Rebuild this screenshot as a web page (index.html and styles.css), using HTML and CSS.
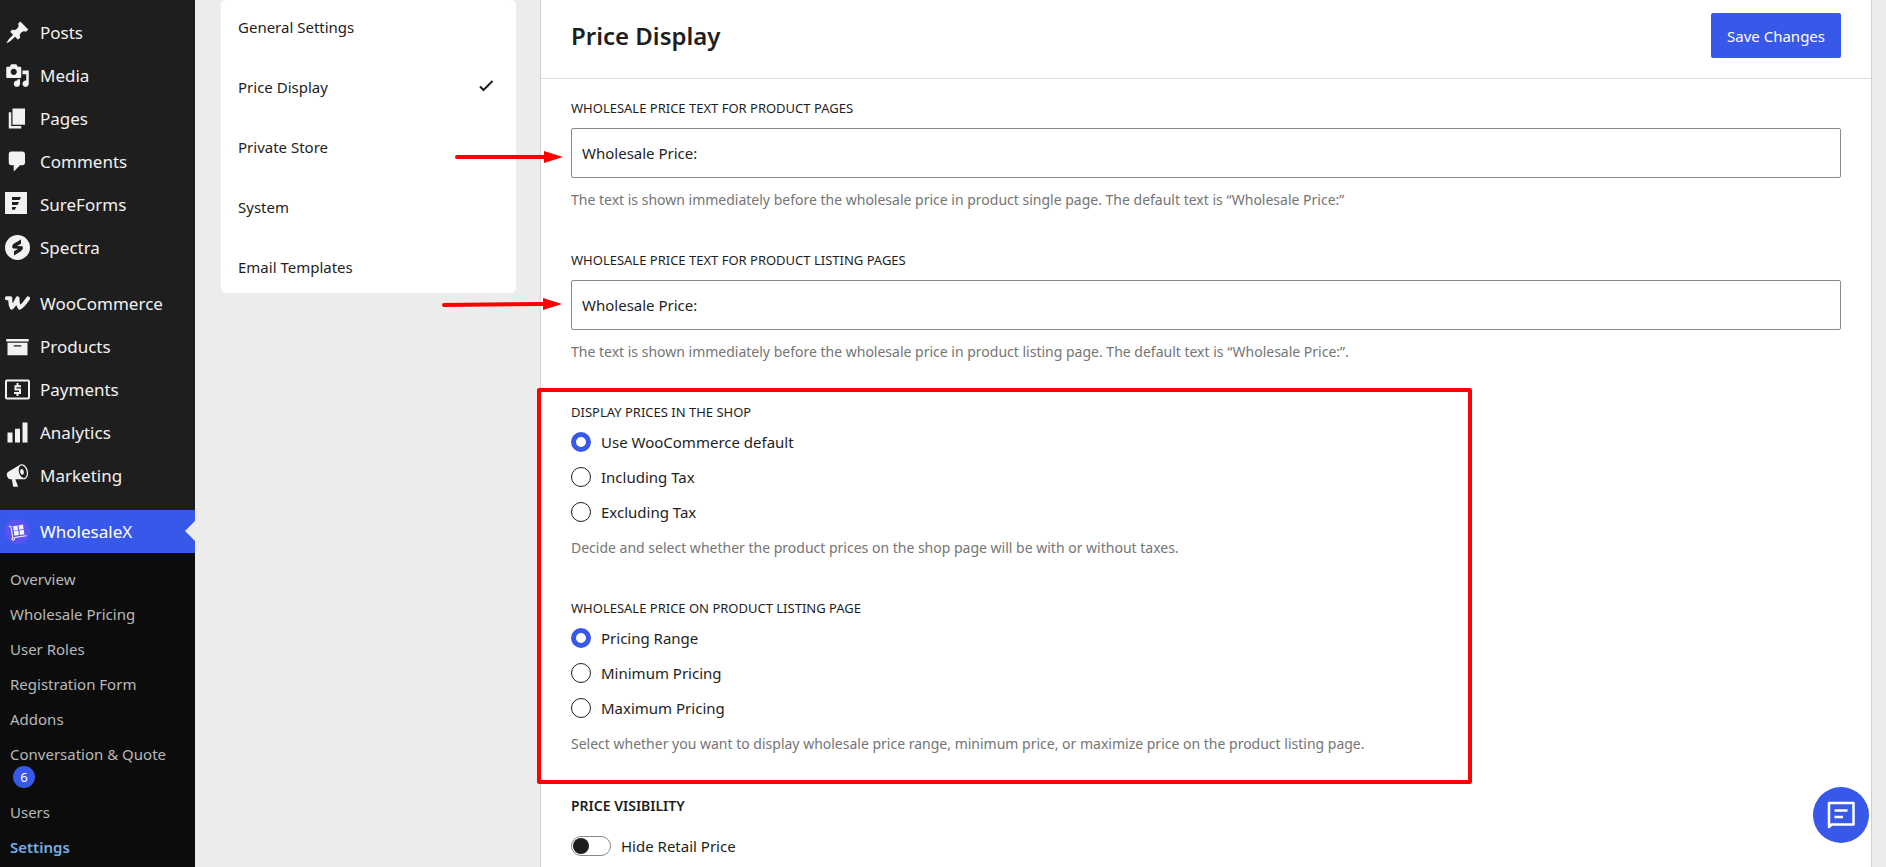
FILE: index.html
```html
<!DOCTYPE html>
<html lang="en">
<head>
    <meta charset="UTF-8">
    <meta name="viewport" content="width=device-width, initial-scale=1.0">
    <title>Settings - WholesaleX</title>
    <link rel="stylesheet" href="styles.css">
</head>
<body>
    <nav class="sidebar" aria-label="Main menu">
        <ul class="menu">
            <li><a href="#"><svg viewBox="0 0 20 20"><path d="M10.44 3.02l1.82-1.82 6.36 6.35-1.83 1.82c-1.05-.68-2.48-.57-3.41.36l-.75.75c-.92.93-1.04 2.35-.35 3.41l-1.83 1.82-2.41-2.41-2.8 2.79c-.42.42-3.38 2.71-3.8 2.29s1.86-3.39 2.28-3.81l2.79-2.79L4.1 9.36l1.83-1.82c1.05.69 2.48.57 3.4-.36l.75-.75c.93-.92 1.05-2.35.36-3.41z"/></svg>Posts</a></li>
            <li><a href="#"><svg viewBox="0 0 20 20"><path fill-rule="evenodd" d="M13 11V4c0-.55-.45-1-1-1h-1.67L9 1H5L3.67 3H2c-.55 0-1 .45-1 1v7c0 .55.45 1 1 1h10c.55 0 1-.45 1-1zM7 4.5c1.38 0 2.5 1.12 2.5 2.5S8.38 9.5 7 9.5 4.5 8.38 4.5 7 5.62 4.5 7 4.5zM14 6h5v10.5c0 1.38-1.12 2.5-2.5 2.5S14 17.88 14 16.5s1.12-2.5 2.5-2.5c.17 0 .34.02.5.05V9h-3V6zm-4 8.05V13h2v3.5c0 1.38-1.12 2.5-2.5 2.5S7 17.88 7 16.5 8.12 14 9.5 14c.17 0 .34.02.5.05z"/></svg>Media</a></li>
            <li><a href="#"><svg viewBox="0 0 20 20"><path d="M6 15V2h10v13H6zm-1 1h8v2H3V5h2v11z"/></svg>Pages</a></li>
            <li><a href="#"><svg viewBox="0 0 20 20"><path d="M5 2h9c1.1 0 2 .9 2 2v7c0 1.1-.9 2-2 2h-2l-5 5v-5H5c-1.1 0-2-.9-2-2V4c0-1.1.9-2 2-2z"/></svg>Comments</a></li>
            <li><a href="#"><svg viewBox="0 0 25 25"><path fill-rule="evenodd" d="M0 0h22v22H0zM7 5v2.900h7.500l1.500-2.900zM7 10v2.900h5.500l1.500-2.900zM7 15v2.800h2.800l1.500-2.800z"/></svg>SureForms</a></li>
            <li><a href="#"><svg viewBox="0 0 25 25"><path fill-rule="evenodd" d="M12.500 0a12.500 12.500 0 1 0 0 25a12.500 12.500 0 1 0 0-25zM16 4.500v4.200l-4 2.200 5 .300c1 .4 1.200 1.600.6 2.900-.6 1.200-1.400 2-2.500 2.700L9 20.500v-4.300l4.200-2.400-5-.300c-1-.4-1.300-1.500-.8-2.800.5-1.200 1.400-2 2.500-2.600z"/></svg>Spectra</a></li>
        </ul>
        <ul class="menu">
            <li><a href="#"><svg viewBox="0 0 25 25"><path class="stroke-w" d="M1.900 7.300h3.500c-.3 3.500 0 7 1.300 9.300 2.700-2.400 4.400-5.800 5.900-9.200-.2 3.400.3 6.900 2 9.200 3.600-1.600 6-5.600 8.500-9.300"/></svg>WooCommerce</a></li>
            <li><a href="#"><svg viewBox="0 0 20 20"><path fill-rule="evenodd" d="M19 4v2H1V4h18zM2 7h16v10H2V7zm11 3V9H7v1h6z"/></svg>Products</a></li>
            <li><a href="#"><svg viewBox="0 0 25 25"><rect class="line" x="1" y="3.500" width="23" height="18" rx="1"/><path class="line" d="M16 9.200H10.500v3.300h4.500v3.500H9M12.500 6v3M12.500 16v3"/></svg>Payments</a></li>
            <li><a href="#"><svg viewBox="0 0 20 20"><path d="M18 18V2h-4v16h4zm-6 0V7H8v11h4zm-6 0v-8H2v8h4z"/></svg>Analytics</a></li>
            <li><a href="#"><svg viewBox="0 0 20 20"><path fill-rule="evenodd" d="M18.150 5.940c.46 1.620.38 3.220-.02 4.480-.42 1.280-1.260 2.180-2.300 2.480-.16.06-.26.06-.4.06-.06.02-.12.02-.18.02-.06.02-.14.02-.22.02h-6.800l2.220 5.500c.02.14-.06.26-.14.34-.08.1-.24.16-.34.16H6.950c-.1 0-.26-.06-.34-.16-.08-.08-.16-.2-.14-.34l-1-5.500H4.250l-.02-.02c-.5.06-1.080-.18-1.540-.62s-.88-1.080-1.060-1.880c-.24-.8-.2-1.560-.02-2.200.18-.62.58-1.080 1.060-1.300l.02-.02 9-5.400c.1-.06.18-.1.24-.16.06-.04.14-.08.24-.12.16-.08.28-.12.5-.18 1.040-.3 2.240.1 3.220.98s1.840 2.240 2.260 3.860zm-2.580 5.980h-.02c.4-.1.74-.34 1.040-.7.58-.7.86-1.760.86-3.040 0-.64-.1-1.300-.28-1.980-.34-1.360-1.020-2.500-1.780-3.240s-1.680-1.100-2.460-.88c-.82.22-1.400.96-1.700 2-.32 1.040-.28 2.360.06 3.720.38 1.360 1 2.500 1.800 3.240.78.74 1.620 1.100 2.480.88zm-2.540-7.080c.22-.04.42-.02.62.04.38.16.76.48 1.020 1s.42 1.200.42 1.780c0 .3-.04.56-.12.8-.18.48-.44.84-.86.94-.34.1-.8-.06-1.140-.4s-.64-.86-.78-1.500c-.18-.62-.12-1.240.02-1.720s.48-.84.82-.94z"/></svg>Marketing</a></li>
        </ul>
        <ul class="menu">
            <li>
                <a href="#" class="current"><svg class="logo" viewBox="0 0 25 25"><circle class="disc" cx="12.500" cy="12.500" r="12.500"/><path d="M8 7.200l4.500-.7.600 4.500-4.500.700zM13.500 6.200l4.500-.7.600 4.500-4.500.700zM8.800 12.300l4.500-.7.600 4.500-4.500.700zM14.300 11.400l4.500-.7.600 4.500-4.500.700z"/><path class="thin" d="M3.800 7.500l2-.4 1.900 11.400M9.500 18.500l12-1.800"/><circle class="thin" cx="8.200" cy="20" r="1.300"/></svg>WholesaleX</a>
                <ul class="submenu">
                    <li><a href="#">Overview</a></li>
                    <li><a href="#">Wholesale Pricing</a></li>
                    <li><a href="#">User Roles</a></li>
                    <li><a href="#">Registration Form</a></li>
                    <li><a href="#">Addons</a></li>
                    <li><a href="#" class="with-badge">Conversation &amp; Quote <span class="badge">6</span></a></li>
                    <li><a href="#">Users</a></li>
                    <li><a href="#" class="active">Settings</a></li>
                </ul>
            </li>
        </ul>
    </nav>

    <main class="content">
        <nav class="tabs" aria-label="Settings sections">
            <a href="#">General Settings</a>
            <a href="#">Price Display
                <svg viewBox="0 0 16 16"><path d="M2 7.500l3.500 3.500L14.500 2"/></svg>
            </a>
            <a href="#">Private Store</a>
            <a href="#">System</a>
            <a href="#">Email Templates</a>
        </nav>

        <form class="panel">
            <div class="panel-header">
                <h1>Price Display</h1>
                <button type="submit" class="save-btn">Save Changes</button>
            </div>

            <div class="panel-body">
                <div class="field">
                    <label class="field-label" for="product-text">Wholesale Price Text for Product Pages</label>
                    <input type="text" id="product-text" class="text-input" value="Wholesale Price:">
                    <p class="help">The text is shown immediately before the wholesale price in product single page. The default text is “Wholesale Price:”</p>
                </div>

                <div class="field">
                    <label class="field-label" for="listing-text">Wholesale Price Text for Product Listing Pages</label>
                    <input type="text" id="listing-text" class="text-input" value="Wholesale Price:">
                    <p class="help">The text is shown immediately before the wholesale price in product listing page. The default text is “Wholesale Price:”.</p>
                </div>

                <fieldset class="field">
                    <legend class="field-label">Display Prices in the Shop</legend>
                    <div class="options">
                        <label><input type="radio" name="shop" checked>Use WooCommerce default</label>
                        <label><input type="radio" name="shop">Including Tax</label>
                        <label><input type="radio" name="shop">Excluding Tax</label>
                    </div>
                    <p class="help">Decide and select whether the product prices on the shop page will be with or without taxes.</p>
                </fieldset>

                <fieldset class="field">
                    <legend class="field-label">Wholesale Price on Product Listing Page</legend>
                    <div class="options">
                        <label><input type="radio" name="listing" checked>Pricing Range</label>
                        <label><input type="radio" name="listing">Minimum Pricing</label>
                        <label><input type="radio" name="listing">Maximum Pricing</label>
                    </div>
                    <p class="help">Select whether you want to display wholesale price range, minimum price, or maximize price on the product listing page.</p>
                </fieldset>

                <h2>Price Visibility</h2>
                <label class="switch"><input type="checkbox" role="switch">Hide Retail Price</label>
            </div>
        </form>

        <!-- callouts over the form -->
        <svg class="arrow arrow-product" viewBox="0 0 108 12"><path class="shaft" d="M2 6h90"/><path d="M89 0l19 6-19 6z"/></svg>
        <svg class="arrow arrow-listing" viewBox="0 0 120 12"><path class="shaft" d="M2 7l100-1"/><path d="M101 0l19 6-19 6z"/></svg>
        <div class="callout-box"></div>
    </main>

    <button type="button" class="chat-btn" aria-label="Open chat">
        <svg viewBox="0 0 28 28"><path d="M2 26V2h24.500v21.500H4.500z"/><path d="M7.500 9.500h13M7.500 16h8.500"/></svg>
    </button>
</body>
</html>
```
FILE: styles.css
```css
* {
    box-sizing: border-box;
}

body {
    margin: 0;
    min-height: 100vh;
    display: flex;
    background-color: #ececec;
    color: #1e1e1e;
    font-family: "Noto Sans", "Open Sans", sans-serif;
    font-size: 15px;
}

a {
    color: inherit;
    text-decoration: none;
}

ul {
    list-style: none;
    margin: 0;
    padding: 0;
}

/* left admin menu */
.sidebar {
    width: 195px;
    flex-shrink: 0;
    padding-top: 11px;
    background-color: #1e1e1e;
    color: #f3f1f1;
    display: flex;
    flex-direction: column;
    gap: 13px;
}

.menu a {
    display: flex;
    align-items: center;
    gap: 10px;
    height: 43px;
    padding-left: 5px;
    font-size: 17px;
}

.menu svg {
    width: 25px;
    height: 25px;
    fill: #f3f1f1;
}

.menu .stroke-w {
    fill: none;
    stroke: #f3f1f1;
    stroke-width: 4;
    stroke-linecap: round;
    stroke-linejoin: round;
}

.menu .line {
    fill: none;
    stroke: #f3f1f1;
    stroke-width: 2;
}

.menu .thin {
    fill: none;
    stroke: #fff;
    stroke-width: 1;
}

.menu .disc {
    fill: #5b52f5;
}

.menu .current {
    position: relative;
    background-color: #3858e9;
    color: #fff;
}

.current::after {
    content: "";
    position: absolute;
    right: 0;
    top: 11px;
    border: 10px solid transparent;
    border-right-color: #ececec;
    border-left-width: 0;
}

.menu:last-child {
    flex: 1;
    background-color: #0c0c0c;
}

.submenu {
    padding-top: 8px;
}

.menu .submenu a {
    height: 35px;
    padding-left: 10px;
    font-size: 15px;
    color: #b9b9b9;
}

.menu .submenu .with-badge {
    height: 58px;
    padding-top: 8px;
    flex-direction: column;
    align-items: flex-start;
    gap: 2px;
    line-height: 20px;
}

.badge {
    width: 22px;
    height: 22px;
    margin-left: 3px;
    border-radius: 50%;
    background-color: #3858e9;
    color: #fff;
    font-size: 13px;
    line-height: 22px;
    text-align: center;
}

.menu .submenu .active {
    color: #72aee6;
    font-weight: 600;
}

/* settings area */
.content {
    position: relative;
    flex: 1;
    display: flex;
    align-items: flex-start;
    gap: 24px;
    padding: 0 14px 0 26px;
}

.tabs {
    width: 295px;
    flex-shrink: 0;
    display: flex;
    flex-direction: column;
    gap: 32px;
    padding: 13px 17px 12px;
    background-color: #fff;
    border-radius: 5px;
}

.tabs a {
    display: flex;
    align-items: center;
    justify-content: space-between;
    height: 28px;
    padding-right: 5px;
}

.tabs svg {
    width: 16px;
    height: 16px;
    fill: none;
    stroke: #1e1e1e;
    stroke-width: 2;
}

.panel {
    flex: 1;
    min-height: 100vh;
    background-color: #fff;
    border: solid #d0d0d0;
    border-width: 0 1px;
}

.panel-header {
    display: flex;
    align-items: center;
    justify-content: space-between;
    padding: 13px 30px 20px;
    border-bottom: 1px solid #e0e0e0;
}

h1 {
    margin: 0;
    font-size: 24px;
    font-weight: 600;
}

.save-btn {
    height: 45px;
    padding: 0 16px;
    border: none;
    border-radius: 2px;
    background-color: #3858e9;
    color: #fff;
    font: inherit;
    cursor: pointer;
}

.panel-body {
    padding: 19px 30px 10px;
}

.field {
    margin: 0 0 40px;
    padding: 0;
    border: none;
}

.field-label {
    display: block;
    margin-bottom: 10px;
    padding: 0;
    font-size: 13px;
    line-height: 20px;
    text-transform: uppercase;
}

.text-input {
    display: block;
    width: 100%;
    height: 50px;
    padding: 0 10px;
    border: 1px solid #8a8a8a;
    border-radius: 2px;
    background-color: #fff;
    color: inherit;
    font: inherit;
}

.help {
    margin: 12px 0 0;
    color: #757575;
    font-size: 14px;
    line-height: 20px;
}

.options {
    display: flex;
    flex-direction: column;
    gap: 15px;
    margin-bottom: 16px;
}

.options label,
.switch {
    display: flex;
    align-items: center;
    gap: 10px;
    line-height: 20px;
}

input[type=radio] {
    appearance: none;
    width: 20px;
    height: 20px;
    margin: 0;
    border: 1px solid #1e1e1e;
    border-radius: 50%;
}

input[type=radio]:checked {
    border: 5px solid #3858e9;
}

h2 {
    margin: 0 0 18px;
    font-size: 14px;
    font-weight: 600;
    line-height: 24px;
    text-transform: uppercase;
}

input[type=checkbox] {
    appearance: none;
    width: 40px;
    height: 20px;
    margin: 0;
    padding: 1px;
    border: 1px solid #8a8a8a;
    border-radius: 10px;
}

input[type=checkbox]::before {
    content: "";
    display: block;
    width: 16px;
    height: 16px;
    border-radius: 50%;
    background-color: #1e1e1e;
}

input[type=checkbox]:checked::before {
    margin-left: auto;
}

/* red callouts */
.arrow {
    position: absolute;
    height: 12px;
    fill: #f00;
}

.arrow .shaft {
    fill: none;
    stroke: #f00;
    stroke-width: 4;
    stroke-linecap: round;
}

.arrow-product {
    left: 260px;
    top: 151px;
    width: 108px;
}

.arrow-listing {
    left: 247px;
    top: 298px;
    width: 120px;
}

.callout-box {
    position: absolute;
    left: 342px;
    top: 388px;
    width: 935px;
    height: 396px;
    border: 4px solid #f00;
    border-radius: 2px;
    pointer-events: none;
}

.chat-btn {
    position: fixed;
    right: 17px;
    bottom: 24px;
    width: 56px;
    height: 56px;
    padding: 14px;
    border: none;
    border-radius: 50%;
    background-color: #3858e9;
    cursor: pointer;
}

.chat-btn svg {
    display: block;
    fill: none;
    stroke: #fff;
    stroke-width: 2.5;
    stroke-linejoin: round;
}
```
